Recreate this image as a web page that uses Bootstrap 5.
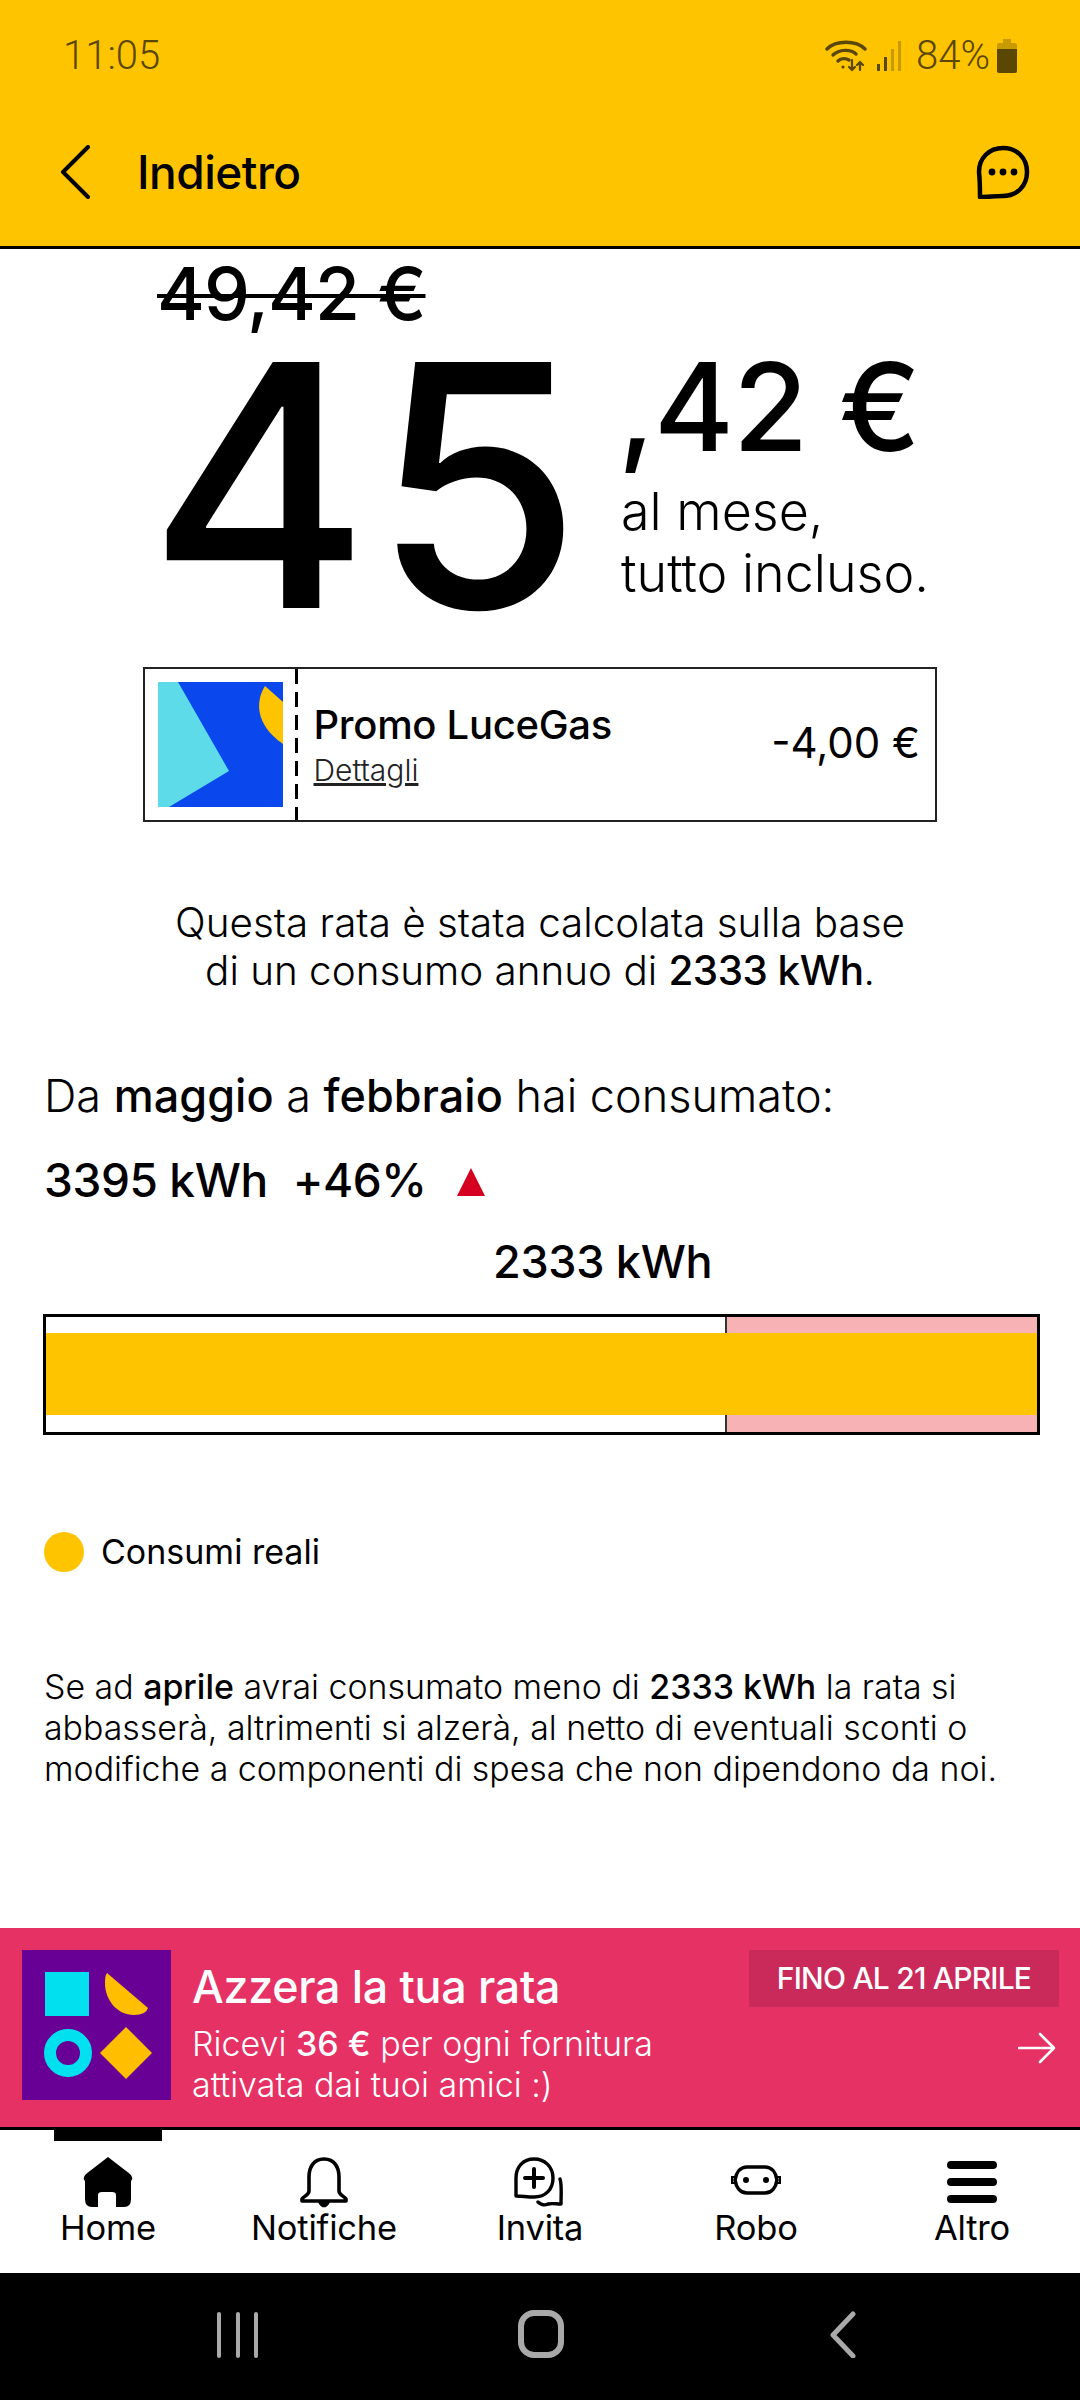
<!DOCTYPE html>
<html lang="it">

<head>
  <meta charset="utf-8">
  <meta name="viewport" content="width=device-width">
  <title>Rata</title>
  <link href="https://cdn.jsdelivr.net/npm/bootstrap@5.3.2/dist/css/bootstrap.min.css" rel="stylesheet">
  <style>
    body { width: 1080px; height: 2400px; font-family: Inter, "Noto Sans", sans-serif; color: #000; overflow: hidden; font-weight: 300; }
    b, .med { font-weight: 500; }
    .top-head { background: #ffc400; height: 249px; border-bottom: 3px solid #000; }
    .status-row { height: 108px; padding: 3px 63px 0 63px; color: #5a4704; font-family: Roboto, sans-serif; font-size: 40px; }
    .status-pct { margin-left: 13px; }
    .status-batt { margin-left: 7px; }
    .title-row { height: 138px; padding: 0 50px 10px 60px; }
    .title-text { font-size: 46px; font-weight: 500; letter-spacing: -.5px; margin-left: 47px; }
    .main-area { height: 1679px; }
    .price-wrap { padding: 8px 0 0 157px; height: 418px; }
    .old-price { font-size: 73px; font-weight: 500; line-height: 74px; letter-spacing: -1px; text-decoration: line-through; text-decoration-thickness: 4px; }
    .big-num { font-size: 338px; font-weight: 500; line-height: 270px; letter-spacing: 3px; width: 476px; margin: 20px 0 0 -9px; }
    .cents { font-size: 122px; font-weight: 500; line-height: 120px; letter-spacing: -1px; margin: 16px 0 0 -6px; }
    .per-month { font-size: 52px; line-height: 62px; margin: 14px 0 0 -3px; }
    .promo-box { width: 794px; height: 155px; margin-left: 143px; border: 2px solid #222; }
    .promo-img { width: 150px; padding: 13px 0 0 13px; }
    .promo-dash { width: 2.5px; background: repeating-linear-gradient(#000 0 15px, transparent 15px 23px); }
    .promo-name { font-size: 40px; font-weight: 500; line-height: 44px; letter-spacing: -.3px; }
    .promo-link { font-size: 30px; line-height: 34px; color: #222; text-decoration: underline; margin-top: 6px; }
    .promo-val { font-size: 42px; font-weight: 400; padding-right: 15px; margin-bottom: 4px; }
    .calc-note { font-size: 40.4px; line-height: 48px; margin-top: 77px; }
    .calc-note b { letter-spacing: -.5px; }
    .period-line { font-size: 45px; line-height: 54px; padding-left: 44px; margin-top: 74px; }
    .kwh-line { font-size: 46px; font-weight: 500; line-height: 54px; padding-left: 44px; margin-top: 30px; letter-spacing: -.4px; }
    .kwh-gap { margin-left: 25px; }
    .red-tri { width: 0; height: 0; border-left: 14px solid transparent; border-right: 14px solid transparent; border-bottom: 28px solid #d5001f; margin-left: 30px; margin-top: 4px; }
    .limit-label { font-size: 45px; font-weight: 500; line-height: 54px; padding-left: 493px; margin-top: 28px; letter-spacing: -.3px; }
    .bar-box { width: 997px; height: 121px; margin: 25px 0 0 43px; border: 3px solid #000; position: relative; }
    .bar-left { width: 681px; border-right: 2px solid #333; }
    .bar-over { background: #f6b2b4; }
    .bar-fill { position: absolute; left: 0; right: 0; top: 16px; height: 82px; background: #ffc400; }
    .legend-row { padding-left: 44px; margin-top: 97px; font-size: 34px; font-weight: 400; line-height: 40px; }
    .legend-dot { width: 40px; height: 40px; border-radius: 50%; background: #ffc400; margin-right: 17px; }
    .foot-note { font-size: 33.9px; line-height: 41px; padding-left: 44px; margin-top: 94px; white-space: nowrap; }
    .promo-banner { background: #e63165; height: 199px; color: #fff; padding: 22px 21px 0 22px; }
    .banner-copy { margin-left: 21px; }
    .banner-title { font-size: 44.8px; font-weight: 500; line-height: 54px; letter-spacing: -.3px; margin-top: 10px; }
    .banner-sub { font-size: 34px; line-height: 41px; margin-top: 9px; }
    .date-tag { background: #c92a5a; width: 310px; height: 57px; font-size: 30px; font-weight: 500; letter-spacing: -.8px; }
    .arrow-slot { margin: 25px 3px 0 0; }
    .tab-bar { height: 146px; border-top: 3px solid #000; position: relative; background: #fff; }
    .tab-mark { position: absolute; left: 54px; top: 0; width: 108px; height: 11px; background: #000; }
    .tab-item { width: 216px; padding-top: 27px; font-size: 34.5px; font-weight: 400; line-height: 40px; letter-spacing: -.2px; }
    .tab-icon { height: 51px; }
    .tab-icon svg { display: block; margin: 0 auto; }
    .sys-bar { background: #000; height: 127px; }
    .sys-icons { margin: 0 6px 5px 0; }
  </style>
</head>

<body class="d-flex flex-column">

  <header class="top-head">
    <div class="status-row d-flex justify-content-between align-items-center">
      <span>11:05</span>
      <div class="d-flex align-items-center">
        <svg width="42" height="32" viewBox="0 0 42 32" fill="none" stroke="#5a4704" stroke-width="3.4" stroke-linecap="round">
          <path d="M2 9 C11 0 31 0 40 9"/>
          <path d="M8 15 C14 9 26 9 31 14"/>
          <path d="M13 21 C16 18 21 18 24 20"/>
          <circle cx="18" cy="27" r="1.6" fill="#5a4704" stroke="none"/>
          <path d="M27 20 V30 M24 27 L27 30 L30 27 M35 30 V22 M32 25 L35 22 L38 25" stroke-width="2.2"/>
        </svg>
        <svg class="ms-2" width="28" height="32" viewBox="0 0 28 32">
          <rect x="2" y="24" width="3" height="7" fill="#5a4704"/>
          <rect x="9" y="17" width="3" height="14" fill="#5a4704"/>
          <rect x="16" y="9" width="3" height="22" fill="#c79a02"/>
          <rect x="23" y="1" width="3" height="30" fill="#c79a02"/>
        </svg>
        <span class="status-pct">84%</span>
        <svg class="status-batt" width="20" height="34" viewBox="0 0 20 34">
          <path d="M6 0 H14 V4 H18 Q20 4 20 6 V32 Q20 34 18 34 H2 Q0 34 0 32 V6 Q0 4 2 4 H6 Z" fill="#c79a02"/>
          <path d="M0 10 H20 V32 Q20 34 18 34 H2 Q0 34 0 32 Z" fill="#5a4704"/>
        </svg>
      </div>
    </div>
    <div class="title-row d-flex align-items-center">
      <svg width="30" height="54" viewBox="0 0 30 54" fill="none" stroke="#000" stroke-width="4" stroke-linecap="round" stroke-linejoin="round">
        <path d="M28 2 L3 27 L28 52"/>
      </svg>
      <span class="title-text">Indietro</span>
      <svg class="ms-auto" width="54" height="54" viewBox="0 0 54 54" fill="none">
        <path d="M27 3 C41 3 51 13 51 27 C51 41 41 51 27 51 C20 51 11 52 4 52 C4 46 4 36 3 27 C3 13 13 3 27 3 Z" stroke="#000" stroke-width="4.5" stroke-linejoin="round"/>
        <circle cx="16" cy="27" r="3.4" fill="#000"/>
        <circle cx="27" cy="27" r="3.4" fill="#000"/>
        <circle cx="38" cy="27" r="3.4" fill="#000"/>
      </svg>
    </div>
  </header>

  <main class="main-area">
    <div class="price-wrap">
      <div class="old-price">49,42 €</div>
      <div class="d-flex">
        <div class="big-num">45</div>
        <div>
          <div class="cents">,42 €</div>
          <div class="per-month">al mese,<br>tutto incluso.</div>
        </div>
      </div>
    </div>

    <div class="promo-box d-flex align-items-stretch">
      <div class="promo-img">
        <svg class="d-block" width="125" height="125" viewBox="0 0 125 125">
          <rect width="125" height="125" fill="#0a47ed"/>
          <path d="M0 0 H20 L71 89 L11 125 H0 Z" fill="#5ddbe8"/>
          <path d="M107 4 C98 18 96 42 125 62 V20 Z" fill="#ffc400"/>
        </svg>
      </div>
      <div class="promo-dash"></div>
      <div class="flex-grow-1 d-flex flex-column justify-content-center ps-3">
        <div class="promo-name">Promo LuceGas</div>
        <div class="promo-link">Dettagli</div>
      </div>
      <div class="promo-val align-self-center">-4,00 €</div>
    </div>

    <p class="calc-note text-center mb-0">Questa rata è stata calcolata sulla base<br>di un consumo annuo di <b>2333 kWh</b>.</p>

    <div class="period-line">Da <b>maggio</b> a <b>febbraio</b> hai consumato:</div>
    <div class="kwh-line d-flex align-items-center">
      <span>3395 kWh</span><span class="kwh-gap">+46%</span><span class="red-tri"></span>
    </div>
    <div class="limit-label">2333 kWh</div>

    <div class="bar-box d-flex">
      <div class="bar-left"></div>
      <div class="bar-over flex-grow-1"></div>
      <div class="bar-fill"></div>
    </div>

    <div class="legend-row d-flex align-items-center">
      <span class="legend-dot"></span>
      <span>Consumi reali</span>
    </div>

    <p class="foot-note mb-0">Se ad <b>aprile</b> avrai consumato meno di <b>2333 kWh</b> la rata si<br>abbasserà, altrimenti si alzerà, al netto di eventuali sconti o<br>modifiche a componenti di spesa che non dipendono da noi.</p>
  </main>

  <section class="promo-banner d-flex">
    <svg class="flex-shrink-0" width="149" height="150" viewBox="0 0 149 150">
      <rect width="149" height="150" fill="#680095"/>
      <rect x="23" y="22" width="44" height="44" fill="#00e0ee"/>
      <path d="M85 23 L126 58 Q124 65 112 65 C95 65 83 50 83 33 Q83 25 85 23 Z" fill="#ffbe00"/>
      <circle cx="46" cy="103" r="18" fill="none" stroke="#00e0ee" stroke-width="12"/>
      <path d="M104 77 L130 103 L104 129 L78 103 Z" fill="#ffbe00"/>
    </svg>
    <div class="banner-copy flex-grow-1">
      <div class="banner-title">Azzera la tua rata</div>
      <div class="banner-sub">Ricevi <b>36 €</b> per ogni fornitura<br>attivata dai tuoi amici :)</div>
    </div>
    <div class="d-flex flex-column align-items-end">
      <div class="date-tag d-flex align-items-center justify-content-center">FINO AL 21 APRILE</div>
      <svg class="arrow-slot" width="38" height="32" viewBox="0 0 38 32" fill="none" stroke="#fff" stroke-width="2.6" stroke-linecap="round" stroke-linejoin="round">
        <path d="M1 16 H36 M22 2 L36 16 L22 30"/>
      </svg>
    </div>
  </section>

  <nav class="tab-bar d-flex">
    <span class="tab-mark"></span>
    <div class="tab-item text-center">
      <div class="tab-icon">
        <svg width="50" height="50" viewBox="0 0 50 50">
          <path d="M25 0 L47 17 Q51 21 48 24 V42 Q48 50 41 50 H33 V38 Q33 35 29 35 H19 Q15 35 15 38 V50 H9 Q2 50 2 42 V24 Q-1 21 3 17 Z" fill="#000"/>
        </svg>
      </div>
      Home
    </div>
    <div class="tab-item text-center">
      <div class="tab-icon">
        <svg width="50" height="51" viewBox="0 0 50 51" fill="none" stroke="#000" stroke-width="3.6" stroke-linejoin="round">
          <path d="M25 2 C14 2 10 11 10 20 V34 C10 38 5 39 3 42 V44 H47 V42 C45 39 40 38 40 34 V20 C40 11 36 2 25 2 Z"/>
          <path d="M21 45 Q25 52 29 45 Z" fill="#000"/>
        </svg>
      </div>
      Notifiche
    </div>
    <div class="tab-item text-center">
      <div class="tab-icon">
        <svg width="52" height="50" viewBox="0 0 52 50" fill="none" stroke="#000" stroke-width="3.4" stroke-linecap="round" stroke-linejoin="round">
          <path d="M20 2 C9 2 2 10 2 21 C2 26 2 32 2 39 C8 39 13 40 20 40 C32 40 39 32 39 21 C39 10 31 2 20 2 Z"/>
          <path d="M20 12 V30 M11 21 H29" stroke-width="4"/>
          <path d="M46 22 C48 28 47 38 47 47 C42 47 38 46 34 47 C30 49 26 47 24 45"/>
        </svg>
      </div>
      Invita
    </div>
    <div class="tab-item text-center">
      <div class="tab-icon pt-2">
        <svg width="50" height="30" viewBox="0 0 50 30" fill="none">
          <path d="M16 2 H34 C41 2 45 8 46 15 C45 22 41 28 34 28 H16 C9 28 5 22 4 15 C5 8 9 2 16 2 Z" stroke="#000" stroke-width="3.6"/>
          <path d="M4 12 H1 V18 H4 M46 12 H49 V18 H46" stroke="#000" stroke-width="2"/>
          <circle cx="15" cy="15" r="3" fill="#000"/>
          <circle cx="35" cy="15" r="3" fill="#000"/>
        </svg>
      </div>
      Robo
    </div>
    <div class="tab-item text-center">
      <div class="tab-icon pt-1">
        <svg width="50" height="42" viewBox="0 0 50 42">
          <rect y="0" width="50" height="8" rx="4" fill="#000"/>
          <rect y="17" width="50" height="8" rx="4" fill="#000"/>
          <rect y="34" width="50" height="8" rx="4" fill="#000"/>
        </svg>
      </div>
      Altro
    </div>
  </nav>

  <footer class="sys-bar d-flex align-items-center justify-content-center">
    <svg class="sys-icons" width="640" height="48" viewBox="0 0 640 48" fill="none" stroke="#a9a9a9" stroke-linecap="round" stroke-linejoin="round">
      <path d="M2 4 V46 M21 4 V46 M39 4 V46" stroke-width="4"/>
      <rect x="304" y="3" width="40" height="42" rx="13" stroke-width="6"/>
      <path d="M636 4 L616 25 L636 46" stroke-width="5"/>
    </svg>
  </footer>

</body>

</html>
